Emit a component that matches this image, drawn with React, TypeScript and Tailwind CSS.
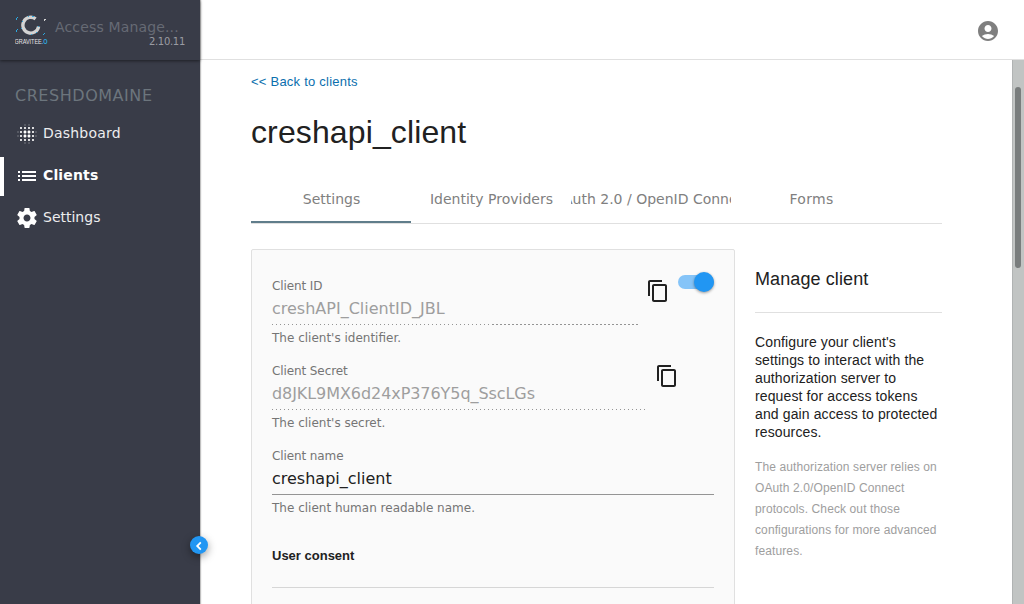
import React from "react";
import { MdAccountCircle, MdBlurOn, MdContentCopy, MdList } from "react-icons/md";

function Logo() {
  return (
    <svg width="34" height="32" viewBox="0 0 34 32" className="shrink-0">
      <path
        d="M20.6 3.9A7.9 7.9 0 1 0 23.6 11.4"
        fill="none"
        stroke="#d3d3d3"
        strokeWidth="3.4"
      />
      <g fill="#2ea9e0">
        <path d="M1 3h1v2h-1zM2 2h1v1h-1zM1 15h1v2h-1zM2 14h1v1h-1zM13 1h1v1h-1zM17 1h2v1h-2zM7 6h1v1h-1zM6 13h1v1h-1zM23 11h1v1h-1zM21 17h1v1h-1zM28 19h1v1h-1zM29 18h1v1h-1zM16 19h1v1h-1z" />
      </g>
      <path d="M29 4h2v1h-2zM29 5h1v1h-1z" fill="#d3d3d3" />
      <text
        x="-0.5"
        y="29"
        fill="#e4e4e6"
        fontFamily="Liberation Sans, sans-serif"
        fontSize="6.5"
        textLength="33"
        lengthAdjust="spacingAndGlyphs"
      >
        GRAVITEE
        <tspan fill="#2ea9e0" fontWeight="bold">
          .O
        </tspan>
      </text>
    </svg>
  );
}

function GearIcon({ className }: { size?: number; className?: string }) {
  return (
    <svg width="24" height="24" viewBox="0 0 24 24" fill="currentColor" className={className}>
      <path d="M19.43 12.98c.04-.32.07-.64.07-.98s-.03-.66-.07-.98l2.11-1.65c.19-.15.24-.42.12-.64l-2-3.46c-.12-.22-.39-.3-.61-.22l-2.49 1c-.52-.4-1.08-.73-1.69-.98l-.38-2.65C14.46 2.18 14.25 2 14 2h-4c-.25 0-.46.18-.49.42l-.38 2.65c-.61.25-1.17.59-1.69.98l-2.49-1c-.23-.09-.49 0-.61.22l-2 3.46c-.13.22-.07.49.12.64l2.11 1.65c-.04.32-.07.65-.07.98s.03.66.07.98l-2.11 1.65c-.19.15-.24.42-.12.64l2 3.46c.12.22.39.3.61.22l2.49-1c.52.4 1.08.73 1.69.98l.38 2.65c.03.24.24.42.49.42h4c.25 0 .46-.18.49-.42l.38-2.65c.61-.25 1.17-.59 1.69-.98l2.49 1c.23.09.49 0 .61-.22l2-3.46c.12-.22.07-.49-.12-.64l-2.11-1.65zM12 15.5c-1.93 0-3.5-1.57-3.5-3.5s1.57-3.5 3.5-3.5 3.5 1.57 3.5 3.5-1.57 3.5-3.5 3.5z" />
    </svg>
  );
}

const items = [
  { label: "Dashboard", icon: MdBlurOn, text: "tracking-[0.2px]", active: false },
  { label: "Clients", icon: MdList, text: "tracking-[0.15px]", active: true },
  { label: "Settings", icon: GearIcon, text: "", active: false },
];

function Sidebar() {
  return (
    <aside className="relative z-10 flex w-[200px] shrink-0 flex-col bg-[#393c48] shadow-[1px_0_1px_rgba(0,0,0,0.25)]">
      <div className="flex h-[60px] shrink-0 pt-[15px] pl-[15px] shadow-[0_1px_3px_rgba(0,0,0,0.5)]">
        <Logo />
        <div className="ml-[6px] flex w-[130px] flex-col">
          <div className="mt-[3px] h-[18px] text-[14px] leading-[18px] tracking-[0.15px] whitespace-nowrap text-[#666a74]">
            Access Manage...
          </div>
          <div className="text-right text-[10px] leading-[12px] tracking-[-0.3px] text-[#999ba2]">2.10.11</div>
        </div>
      </div>
      <div className="mt-[26px] pl-[15px] text-[16px] leading-[20px] tracking-[0.54px] text-[#6c757d]">
        CRESHDOMAINE
      </div>
      <nav className="mt-[9px] flex flex-col gap-[3px]">
        {items.map(({ label, icon: Icon, text, active }) => (
          <a
            key={label}
            className={
              active
                ? "flex h-[39px] items-center border-l-4 border-white pl-[11px] font-bold text-white"
                : "flex h-[39px] items-center border-l-4 border-transparent pl-[11px] text-[#ececee]"
            }
          >
            <Icon size={24} className="mr-[4px] mb-px text-white" />
            <span className={text}>
              <span className="block pb-[3px] text-[14px] leading-[18px]">{label}</span>
            </span>
          </a>
        ))}
      </nav>
      <button className="absolute top-[536px] left-[190px] flex h-[18px] w-[18px] items-center justify-center rounded-full bg-[#2196f3] text-white shadow-[0_3px_8px_rgba(0,0,0,0.4)]">
        <svg width="8" height="10" viewBox="0 0 8 10" fill="none" className="mt-px">
          <path d="M5.8 1.4L2.2 5l3.6 3.6" stroke="currentColor" strokeWidth="1.8" />
        </svg>
      </button>
    </aside>
  );
}

function Field({
  label,
  value,
  hint,
  width,
  valueClass,
  underline,
}: {
  label: string;
  value: string;
  hint: string;
  width: string;
  valueClass: string;
  underline: React.ReactNode;
}) {
  return (
    <div className={width}>
      <div className="text-[12px] leading-[14px] tracking-[-0.1px] text-[#757575]">{label}</div>
      <div className={valueClass}>{value}</div>
      {underline}
      <div className="mt-[6px] text-[12px] leading-[14px] text-[#757575]">{hint}</div>
    </div>
  );
}

const tabs = ["Settings", "Identity Providers", "OAuth 2.0 / OpenID Connect", "Forms"];

export default function App() {
  return (
    <div className="flex h-[604px] w-[1024px] overflow-hidden bg-white font-['DejaVu_Sans',sans-serif] text-[#212121]">
      <Sidebar />
      <div className="flex min-w-0 flex-1 flex-col">
        <header className="flex h-[60px] shrink-0 items-center justify-end border-b border-[#e0e0e0] pt-[2px] pr-[24px]">
          <MdAccountCircle size={24} color="#7f7f7f" />
        </header>
        <div className="flex min-h-0 flex-1">
          <main className="min-w-0 flex-1 overflow-hidden pl-[51px]">
            <div className="w-[691px]">
              <a className="mt-[14px] block font-['Liberation_Sans',sans-serif] text-[13px] leading-[16px] tracking-[0.23px] text-[#0b6fae]">
                &lt;&lt; Back to clients
              </a>
              <h1 className="mt-[22px] font-['Liberation_Sans',sans-serif] text-[32px] leading-[40px] tracking-[0.12px]">
                creshapi_client
              </h1>
              <div className="mt-[23px] flex h-[49px] border-b border-[#e0e0e0]">
                {tabs.map((t, i) => (
                  <div
                    key={t}
                    className={
                      i === 0
                        ? "flex h-[48px] w-[160px] items-center justify-center border-b-2 border-[#607d8b] pt-[2px] pl-px text-[14px] text-[#808080]"
                        : "flex h-[48px] w-[160px] items-center justify-center overflow-hidden border-b-2 border-transparent pt-[2px] pl-px text-[14px] text-[#808080]"
                    }
                  >
                    <span className={t === "Forms" ? "tracking-[0.3px]" : "whitespace-nowrap"}>{t}</span>
                  </div>
                ))}
              </div>
              <div className="mt-[25px] flex gap-[20px]">
                <section className="h-[400px] w-[484px] shrink-0 rounded-[2px] border border-[#e0e0e0] bg-[#fafafa] px-[20px] pt-[29px]">
                  <div className="flex h-[85px]">
                    <Field
                      label="Client ID"
                      value="creshAPI_ClientID_JBL"
                      hint="The client's identifier."
                      width="w-[366px]"
                      valueClass="mt-[5px] h-[26px] text-[16px] leading-[22px] text-[#9e9e9e]"
                      underline={
                        <div className="flex h-px">
                          <div className="w-[220px] bg-[repeating-linear-gradient(to_right,#949494_0px,#949494_1px,transparent_1px,transparent_4px)]" />
                          <div className="flex-1 bg-[repeating-linear-gradient(to_right,#949494_0px,#949494_2px,transparent_2px,transparent_4px)]" />
                        </div>
                      }
                    />
                    <MdContentCopy size={24} className="ml-[8px] shrink-0" />
                    <div className="mt-[-4px] ml-[8px] flex h-[14px] w-[36px] items-center justify-end rounded-full bg-[#85c4f8]">
                      <div className="h-[20px] w-[20px] shrink-0 rounded-full bg-[#2196f3] shadow-[0_1px_3px_rgba(0,0,0,0.4)]" />
                    </div>
                  </div>
                  <div className="flex h-[85px]">
                    <Field
                      label="Client Secret"
                      value="d8JKL9MX6d24xP376Y5q_SscLGs"
                      hint="The client's secret."
                      width="w-[374px]"
                      valueClass="mt-[5px] h-[26px] text-[16px] leading-[22px] tracking-[-0.07px] text-[#9e9e9e]"
                      underline={
                        <div className="h-px bg-[repeating-linear-gradient(to_right,#949494_0px,#949494_1px,transparent_1px,transparent_4px)]" />
                      }
                    />
                    <MdContentCopy size={24} className="ml-[9px] shrink-0" />
                  </div>
                  <Field
                    label="Client name"
                    value="creshapi_client"
                    hint="The client human readable name."
                    width="w-[442px]"
                    valueClass="mt-[5px] h-[26px] text-[16px] leading-[22px] text-[#212121]"
                    underline={<div className="h-px bg-[#949494]" />}
                  />
                  <h2 className="mt-[33px] border-b border-[#d6d6d6] pb-[23px] font-['Liberation_Sans',sans-serif] text-[13px] leading-[16px] font-bold">
                    User consent
                  </h2>
                </section>
                <aside className="w-[187px] pt-[18px] font-['Liberation_Sans',sans-serif]">
                  <h3 className="border-b border-[#e0e0e0] pb-[21px] text-[18px] leading-[24px] tracking-[0.1px]">
                    Manage client
                  </h3>
                  <p className="mt-[20px] text-[14px] leading-[18px] tracking-[0.12px] whitespace-nowrap">
                    Configure your client's
                    <br />
                    settings to interact with the
                    <br />
                    authorization server to
                    <br />
                    request for access tokens
                    <br />
                    and gain access to protected
                    <br />
                    resources.
                  </p>
                  <p className="mt-[16px] text-[12px] leading-[21px] tracking-[0.11px] whitespace-nowrap text-[#9e9e9e]">
                    The authorization server relies on
                    <br />
                    OAuth 2.0/OpenID Connect
                    <br />
                    protocols. Check out those
                    <br />
                    configurations for more advanced
                    <br />
                    features.
                  </p>
                </aside>
              </div>
            </div>
          </main>
          <div className="flex w-[12px] border-l border-[#b0b3b3] bg-[#c1c4c3] pt-[27px] pl-[2px]">
            <div className="h-[181px] w-[6px] rounded-full bg-[#797d7d]" />
          </div>
        </div>
      </div>
    </div>
  );
}
